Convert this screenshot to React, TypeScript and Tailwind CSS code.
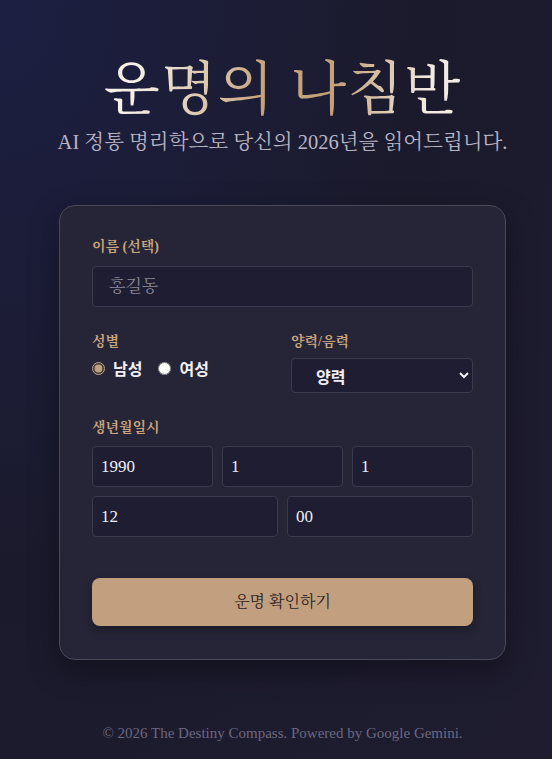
import React from "react";

const serif = { fontFamily: '"Liberation Serif", "Noto Serif CJK KR", "Noto Sans CJK KR", serif' };
const sans = { fontFamily: '"Noto Sans CJK KR", "Noto Sans", sans-serif' };

export default function App() {
  const inputCls =
    "h-[41px] w-full rounded-[4px] border border-[#3a3a4e] bg-[#1e1d31] px-2 text-[17px] text-[#f2f0f5] outline-none";
  return (
    <div
      className="min-h-[759px] w-full bg-[radial-gradient(ellipse_at_0%_0%,#1c1f42_0%,#1b1a2c_55%,#1f1c30_100%)] flex flex-col items-center pl-[13px]"
      style={serif}
    >
      <h1 className="mt-[51px] text-[58px] leading-[78px] font-normal tracking-[1px] bg-[linear-gradient(100deg,#f6f0e6_10%,#c7a37c_45%,#c5a17b_65%,#f3ece2_90%)] bg-clip-text text-transparent">
        운명의 나침반
      </h1>
      <p className="mt-[0px] text-[20.5px] leading-[26px] text-[#b9b5c4]">
        AI 정통 명리학으로 당신의 2026년을 읽어드립니다.
      </p>

      <div className="mt-[50px] w-[447px] rounded-[16px] border border-[#4a4958] bg-[#262537] px-[32px] pt-[32px] pb-[33px] shadow-[0_10px_30px_rgba(0,0,0,0.35)]">
        <label className="block text-[14px] font-bold text-[#c9a47c] leading-[18px]">이름 (선택)</label>
        <input className={inputCls + " mt-[10px] px-4 text-[16px] placeholder:text-[#8b8898]"} placeholder="홍길동" style={serif} />

        <div className="mt-[26px] grid grid-cols-2 gap-[17px]">
          <div>
            <label className="block text-[14px] font-bold text-[#c9a47c] leading-[18px]">성별</label>
            <div className="mt-[5px] flex items-center gap-[16px] text-[16px] font-bold text-[#f2f0f5]" style={sans}>
              <label className="flex items-center gap-[8px]">
                <input type="radio" name="g" defaultChecked className="m-0 h-[13px] w-[13px] accent-[#c2a07f]" />
                남성
              </label>
              <label className="flex items-center gap-[8px]">
                <input type="radio" name="g" className="m-0 h-[13px] w-[13px] accent-[#c2a07f]" />
                여성
              </label>
            </div>
          </div>
          <div>
            <label className="block text-[14px] font-bold text-[#c9a47c] leading-[18px]">양력/음력</label>
            <select
              className="mt-[7px] h-[35px] w-full rounded-[4px] border border-[#3a3a4e] bg-[#1e1d31] pl-[20px] pr-[8px] text-[16px] font-bold text-[#f2f0f5] outline-none"
              style={sans}
              defaultValue="solar"
            >
              <option value="solar">양력</option>
              <option value="lunar">음력</option>
            </select>
          </div>
        </div>

        <label className="mt-[26px] block text-[14px] font-bold text-[#c9a47c] leading-[18px]">생년월일시</label>
        <div className="mt-[9px] grid grid-cols-3 gap-[9px]">
          <input className={inputCls} defaultValue="1990" style={serif} />
          <input className={inputCls} defaultValue="1" style={serif} />
          <input className={inputCls} defaultValue="1" style={serif} />
        </div>
        <div className="mt-[9px] grid grid-cols-2 gap-[9px]">
          <input className={inputCls} defaultValue="12" style={serif} />
          <input className={inputCls} defaultValue="00" style={serif} />
        </div>

        <button
          className="mt-[41px] h-[48px] w-full rounded-[8px] bg-[#c2a07f] text-[16px] text-[#2b2224] shadow-[0_4px_10px_rgba(0,0,0,0.3)]"
          style={serif}
        >
          운명 확인하기
        </button>
      </div>

      <p className="mt-[62px] text-[15px] text-[#6b6981]">
        © 2026 The Destiny Compass. Powered by Google Gemini.
      </p>
    </div>
  );
}
